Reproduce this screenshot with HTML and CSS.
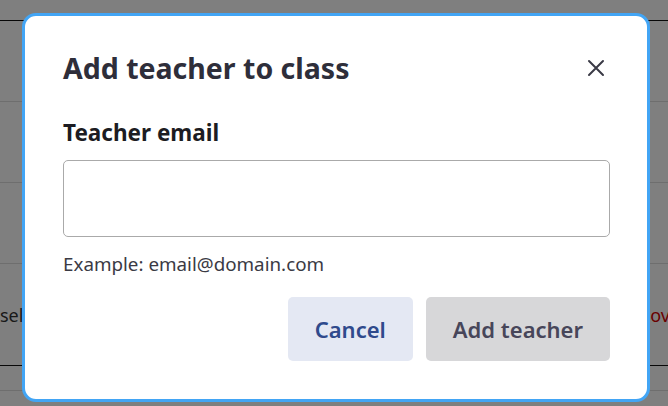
FILE: index.html
```html
<!DOCTYPE html>
<html lang="en">
<head>
  <meta charset="UTF-8" />
  <meta name="viewport" content="width=device-width, initial-scale=1.0"/>
  <title>Add teacher to class</title>
  <link rel="stylesheet" href="styles.css">
</head>
<body>
  <div class="page">
    <div class="row row-head"></div>
    <div class="row"></div>
    <div class="row"></div>
    <div class="row row-tall">
      <span class="cell">selected</span>
      <span class="cell action">Remove</span>
    </div>
    <div class="row row-last"></div>
  </div>

  <div class="overlay"></div>

  <div class="modal" role="dialog" aria-labelledby="modal-title">
    <div class="modal-header">
      <h2 id="modal-title">Add teacher to class</h2>
      <button class="close-button" aria-label="Close">
        <svg width="18" height="18" viewBox="0 0 18 18">
          <path d="M2 2 L16 16 M16 2 L2 16" stroke="#3a3a46" stroke-width="2" stroke-linecap="round"/>
        </svg>
      </button>
    </div>

    <label class="field-label" for="teacher-email">Teacher email</label>
    <input class="field-input" id="teacher-email" type="email">
    <p class="field-hint">Example: email@domain.com</p>

    <div class="modal-actions">
      <button class="btn btn-cancel">Cancel</button>
      <button class="btn btn-submit" disabled>Add teacher</button>
    </div>
  </div>
</body>
</html>
```

FILE: styles.css
```css
body {
  margin: 0;
  font-family: "Noto Sans", "Open Sans", sans-serif;
  background-color: #fff;
  overflow: hidden;
  height: 406px;
}
.page {
  padding-top: 20px;
}
.row {
  height: 81px;
  border-top: 1px solid #dcdcdc;
  box-sizing: border-box;
}
.row-head {
  border-top: 1px solid #111;
}
.row-tall {
  height: 102px;
  display: flex;
  justify-content: space-between;
  align-items: center;
  font-size: 18px;
  color: #333;
}
.row-tall .action {
  color: #d40000;
  margin-right: -12px;
}
.row-last {
  height: 26px;
  border-top: 1px solid #111;
  border-bottom: 1px solid #dcdcdc;
}
.overlay {
  position: fixed;
  inset: 0;
  background-color: rgba(0, 0, 0, 0.5);
}
.modal {
  position: fixed;
  top: 13px;
  left: 22px;
  width: 628px;
  height: 389px;
  box-sizing: border-box;
  padding: 35px 37px 0 38px;
  background-color: #fff;
  border: 3px solid #42a5f5;
  border-radius: 14px;
}
.modal-header {
  display: flex;
  justify-content: space-between;
  align-items: center;
}
.modal-header h2 {
  margin: 0;
  font-size: 28.5px;
  line-height: 34px;
  font-weight: 700;
  color: #2e2e3a;
}
.close-button {
  background: none;
  border: none;
  padding: 0;
  margin-right: 5px;
  width: 18px;
  height: 18px;
  cursor: pointer;
}
.field-label {
  display: block;
  margin-top: 32px;
  font-size: 22.5px;
  line-height: 31px;
  font-weight: 700;
  color: #1c1c22;
}
.field-input {
  display: block;
  width: 100%;
  height: 77px;
  margin-top: 12px;
  box-sizing: border-box;
  border: 1px solid #aaa;
  border-radius: 5px;
  font-size: 18px;
}
.field-hint {
  margin: 14px 0 0;
  font-size: 18.8px;
  line-height: 26px;
  color: #3a3a44;
}
.modal-actions {
  display: flex;
  justify-content: flex-end;
  gap: 13px;
  margin-top: 20px;
}
.btn {
  height: 64px;
  padding: 0 27px;
  border: none;
  border-radius: 5px;
  font-family: inherit;
  font-size: 22px;
  font-weight: 600;
  cursor: pointer;
}
.btn-cancel {
  background-color: #e4e8f3;
  color: #2f4a8c;
}
.btn-submit {
  background-color: #d7d7d9;
  color: #47465a;
}
```
